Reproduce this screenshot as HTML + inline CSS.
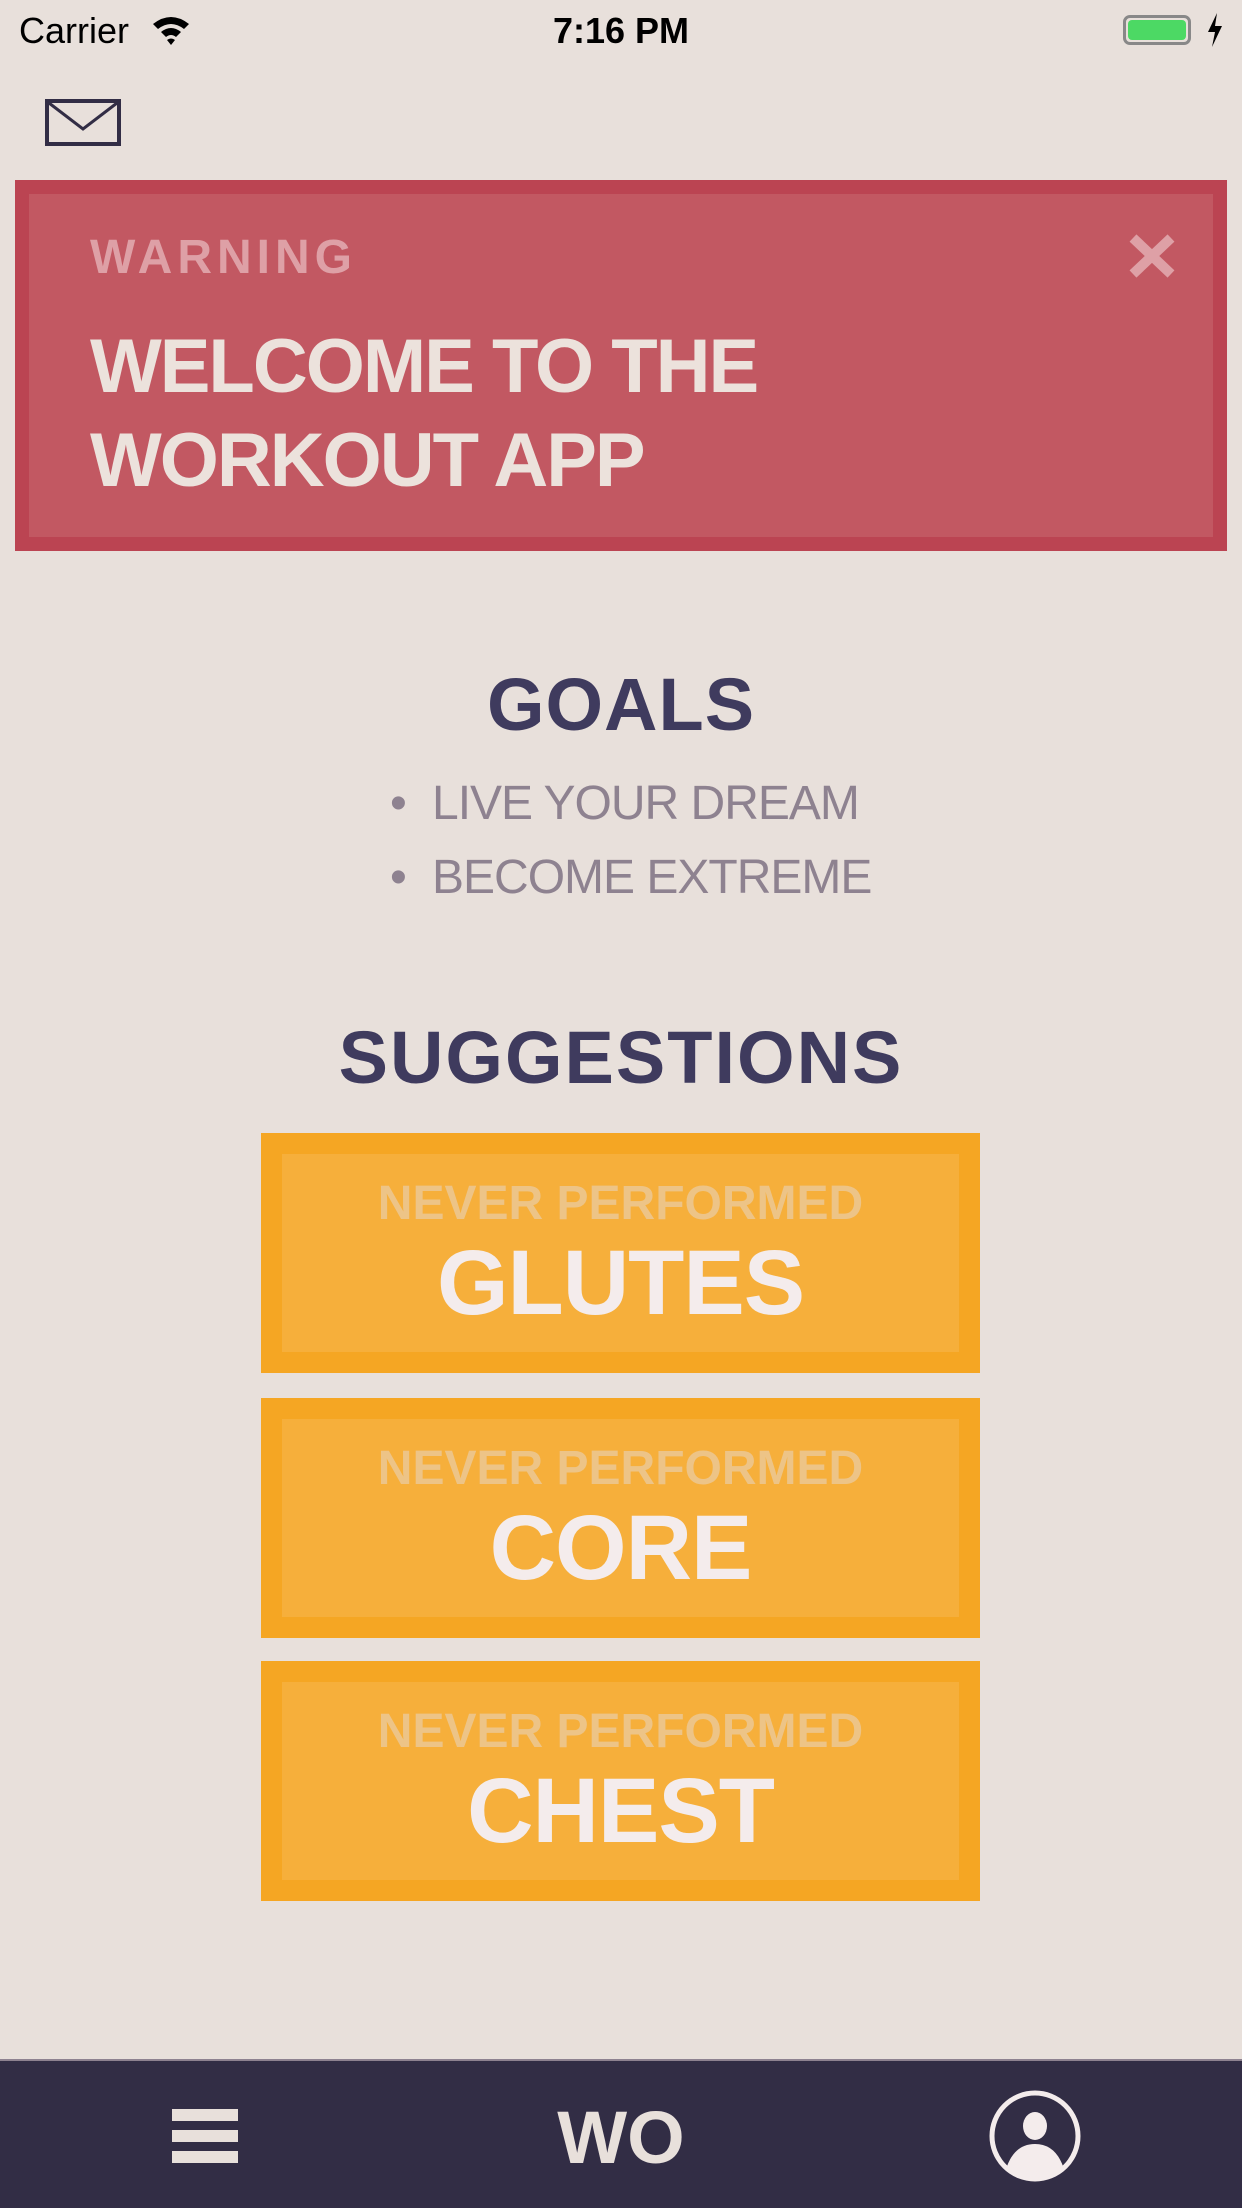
<!DOCTYPE html>
<html><head><meta charset="utf-8"><style>
*{margin:0;padding:0;box-sizing:border-box}
html,body{width:1242px;height:2208px;background:#e8e0db;overflow:hidden;font-family:"Liberation Sans",sans-serif}
.abs{position:absolute}
.c{position:absolute;left:0;width:1242px;text-align:center}
.card{position:absolute;left:261px;width:719px;height:240px;background:#f6af3b;border:21px solid #f5a623}
.card .s{position:absolute;left:0;right:0;top:22px;text-align:center;font-weight:bold;font-size:48px;color:#edc487;letter-spacing:0px}
.card .b{position:absolute;left:0;right:0;top:77px;text-align:center;font-weight:bold;font-size:92px;color:#f4ecec;letter-spacing:-1px}
</style></head><body>
<div class="abs" style="left:19px;top:10px;font-size:36px;color:#000">Carrier</div>
<svg class="abs" style="left:151px;top:14px" width="40" height="32" viewBox="0 0 40 32"><path d="M2 10 Q20 -4 38 10 L33 15 Q20 5 7 15Z M10 18 Q20 10 30 18 L25 23 Q20 19 15 23Z M20 31 L16 26 Q20 23 24 26Z" fill="#000"/></svg>
<div class="c" style="top:10px;font-size:36px;font-weight:bold;color:#000">7:16 PM</div>
<div class="abs" style="left:1123px;top:15px;width:68px;height:30px;border:3px solid #888;border-radius:7px;padding:2px"><div style="width:100%;height:100%;background:#4cd964;border-radius:4px"></div></div>
<svg class="abs" style="left:1206px;top:13px" width="18" height="34" viewBox="0 0 18 34"><path d="M11 0 L2 19 H9 L6 34 L16 13 H9Z" fill="#000"/></svg>
<svg class="abs" style="left:45px;top:99px" width="76" height="47" viewBox="0 0 76 47"><rect x="2" y="2" width="72" height="43" fill="none" stroke="#322d45" stroke-width="4"/><path d="M4 4 L38 30 L72 4" fill="none" stroke="#322d45" stroke-width="3"/></svg>
<div class="abs" style="left:15px;top:180px;width:1212px;height:371px;background:#c25862;border:14px solid #bb4452"></div>
<div class="abs" style="left:90px;top:230px;font-size:48px;font-weight:bold;color:#dea0a6;letter-spacing:5px">WARNING</div>
<svg class="abs" style="left:1127px;top:232px" width="50" height="48" viewBox="0 0 50 48"><path d="M6 6 L44 42 M44 6 L6 42" stroke="#dea0a6" stroke-width="10"/></svg>
<div class="abs" style="left:90px;top:320px;font-size:76px;line-height:94px;font-weight:bold;color:#ece2dc;letter-spacing:-2px">WELCOME TO THE<br>WORKOUT APP</div>
<div class="c" style="top:662px;font-size:74px;font-weight:bold;color:#3f3b5e;letter-spacing:1px">GOALS</div>
<div class="abs" style="left:390px;top:767px;font-size:48px;line-height:74px;color:#8e8290;letter-spacing:-1px">
<div><span style="display:inline-block;width:42px">•</span>LIVE YOUR DREAM</div>
<div><span style="display:inline-block;width:42px">•</span>BECOME EXTREME</div>
</div>
<div class="c" style="top:1015px;font-size:74px;font-weight:bold;color:#3f3b5e;letter-spacing:2px">SUGGESTIONS</div>
<div class="card" style="top:1133px"><div class="s">NEVER PERFORMED</div><div class="b">GLUTES</div></div>
<div class="card" style="top:1398px"><div class="s">NEVER PERFORMED</div><div class="b">CORE</div></div>
<div class="card" style="top:1661px"><div class="s">NEVER PERFORMED</div><div class="b">CHEST</div></div>
<div class="abs" style="left:0;top:2059px;width:1242px;height:149px;background:#322d45;border-top:2px solid #8e8290"></div>
<div class="abs" style="left:172px;top:2109px;width:66px;height:12px;background:#e8e0db"></div>
<div class="abs" style="left:172px;top:2130px;width:66px;height:12px;background:#e8e0db"></div>
<div class="abs" style="left:172px;top:2151px;width:66px;height:12px;background:#e8e0db"></div>
<div class="c" style="top:2095px;font-size:74px;font-weight:bold;color:#e8e0db">WO</div>
<svg class="abs" style="left:988px;top:2089px" width="94" height="94" viewBox="0 0 94 94"><circle cx="47" cy="47" r="43" fill="none" stroke="#f4ecec" stroke-width="5"/><ellipse cx="47" cy="37" rx="12" ry="14" fill="#f4ecec"/><path d="M18 80 Q26 55 47 55 Q68 55 76 80 Q62 92 47 92 Q32 92 18 80Z" fill="#f4ecec"/></svg>
</body></html>
